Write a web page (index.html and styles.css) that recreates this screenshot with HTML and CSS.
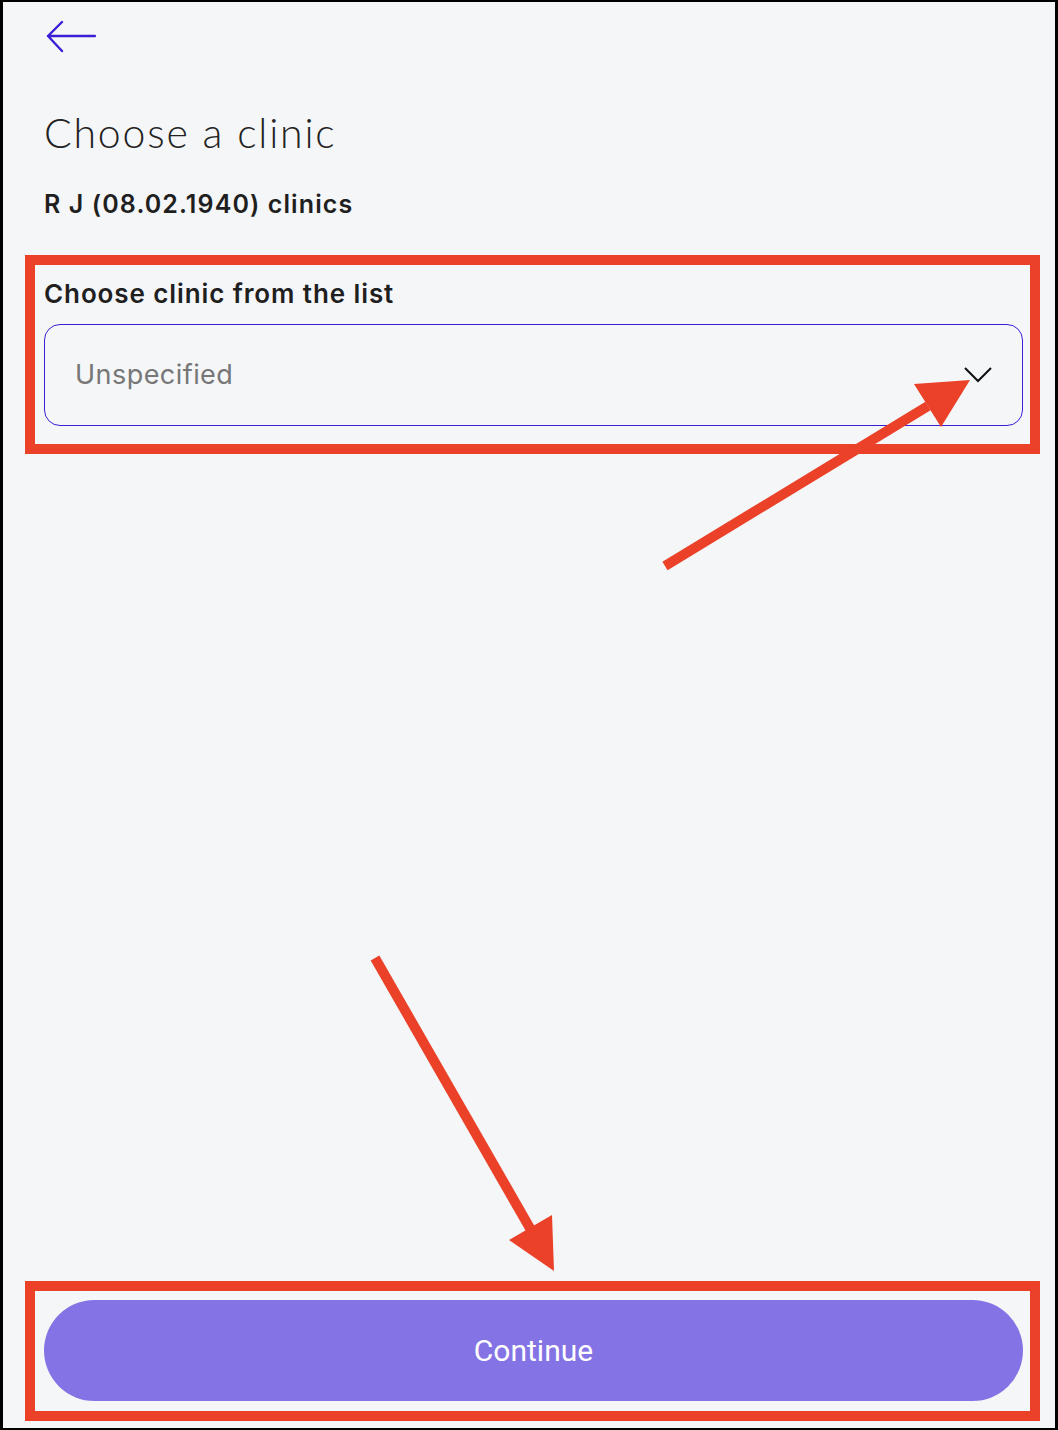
FILE: index.html
```html
<!DOCTYPE html>
<html lang="en">
<head>
    <meta charset="UTF-8">
    <meta name="viewport" content="width=device-width, initial-scale=1.0">
    <link rel="stylesheet" href="styles.css">
</head>
<body>
    <div class="frame">
        <main class="screen">
            <button class="back" aria-label="Back">
                <svg width="52" height="34" viewBox="0 0 52 34">
                    <path d="M51 17 H4 M18 3 L4 17 L18 32" fill="none" stroke="#3a1fd6" stroke-width="2.4" stroke-linecap="round" stroke-linejoin="round"/>
                </svg>
            </button>

            <h1 class="title">Choose a clinic</h1>
            <p class="patient">R J (08.02.1940) clinics</p>

            <div class="field">
                <label class="field-label">Choose clinic from the list</label>
                <div class="select">
                    <span class="placeholder">Unspecified</span>
                    <svg class="chevron" width="30" height="18" viewBox="0 0 30 18">
                        <path d="M2 2 L15 15 L28 2" fill="none" stroke="#111" stroke-width="2"/>
                    </svg>
                </div>
            </div>

            <div class="spacer"></div>

            <button class="continue">Continue</button>
        </main>

        <!-- annotations drawn on top of the screenshot -->
        <div class="mark mark-select"></div>
        <div class="mark mark-button"></div>
        <svg class="arrows" width="1052" height="1426" viewBox="3 2 1052 1426">
            <line x1="665" y1="566" x2="928" y2="406" stroke="#ea4128" stroke-width="10"/>
            <polygon points="914,384 970,380 941,427" fill="#ea4128"/>
            <line x1="375" y1="958" x2="531" y2="1230" stroke="#ea4128" stroke-width="10"/>
            <polygon points="509,1240 552,1215 554,1271" fill="#ea4128"/>
        </svg>
    </div>
</body>
</html>
```

FILE: styles.css
```css
* {
    box-sizing: border-box;
}

body {
    margin: 0;
    background-color: #000;
}

.frame {
    position: relative;
    width: 1058px;
    height: 1430px;
    border-style: solid;
    border-color: #000;
    border-width: 2px 3px;
    background-color: #f5f6f8;
    font-family: Inter, "Liberation Sans", sans-serif;
    color: #1f1f1f;
}

.screen {
    display: flex;
    flex-direction: column;
    height: 100%;
    padding: 17px 32px 27px 41px;
}

.back {
    align-self: flex-start;
    width: 52px;
    height: 34px;
    padding: 0;
    border: none;
    background: none;
}

.back svg {
    display: block;
}

.title {
    margin: 56px 0 0;
    font-family: Lato, "Open Sans", sans-serif;
    font-weight: 300;
    font-size: 41px;
    line-height: 48px;
    letter-spacing: 1.8px;
    color: #222;
}

.patient {
    margin: 32px 0 0;
    font-size: 25px;
    line-height: 30px;
    font-weight: 600;
    letter-spacing: 1.1px;
}

.field {
    margin-top: 60px;
}

.field-label {
    display: block;
    font-size: 26px;
    line-height: 30px;
    font-weight: 600;
    letter-spacing: 0.9px;
}

.select {
    display: flex;
    align-items: center;
    justify-content: space-between;
    height: 102px;
    margin-top: 15px;
    padding: 0 29px 0 30px;
    border: 1px solid #3a1fd6;
    border-radius: 16px;
}

.placeholder {
    font-size: 27px;
    line-height: 32px;
    letter-spacing: 0.45px;
    color: #777;
}

.chevron {
    display: block;
}

.spacer {
    flex: 1;
}

.continue {
    height: 101px;
    border: none;
    border-radius: 51px;
    background-color: #8473e4;
    color: #fff;
    font-family: Roboto, "Liberation Sans", sans-serif;
    font-size: 30px;
}

.mark {
    position: absolute;
    left: 22px;
    width: 1015px;
    border: 10px solid #ea4128;
}

.mark-select {
    top: 253px;
    height: 199px;
}

.mark-button {
    top: 1279px;
    height: 140px;
}

.arrows {
    position: absolute;
    left: 0;
    top: 0;
}
```
